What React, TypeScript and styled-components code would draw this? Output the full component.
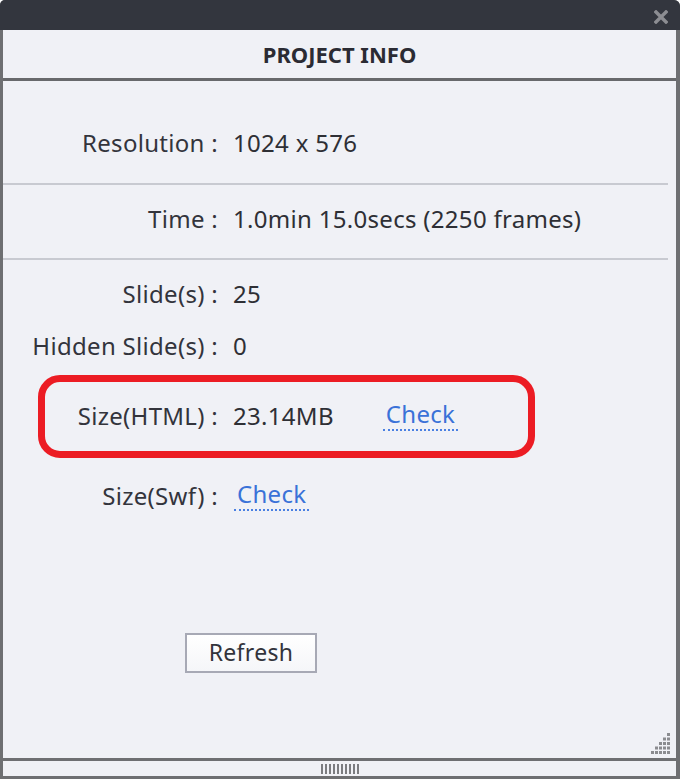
import React from 'react';
import styled, { createGlobalStyle } from 'styled-components';

const GlobalStyle = createGlobalStyle`
  html, body {
    margin: 0;
    padding: 0;
    background: #ffffff;
  }
  body {
    font-family: "Noto Sans", "DejaVu Sans", sans-serif;
  }
`;

const Frame = styled.div`
  width: 680px;
  height: 779px;
  display: flex;
  flex-direction: column;
  background: #6e6f72;
  border-radius: 5px 6px 0 0;
  overflow: hidden;
  box-sizing: border-box;
  padding-bottom: 3px;
`;

const TitleBar = styled.div`
  height: 30px;
  flex: none;
  display: flex;
  align-items: center;
  justify-content: flex-end;
  padding-right: 12px;
  background: #33363e;
`;

const CloseButton = styled.button`
  border: none;
  background: transparent;
  padding: 0;
  margin-top: 3px;
  width: 14px;
  height: 14px;
  display: flex;
  cursor: pointer;
`;

const Header = styled.div`
  height: 48px;
  flex: none;
  margin: 0 4px 0 3px;
  border-bottom: 3px solid #68696c;
  background: #f0f1f6;
  display: flex;
  align-items: center;
  justify-content: center;
  font-size: 22px;
  font-weight: 700;
  color: #2b2b33;
`;

const Body = styled.div`
  flex: 1;
  margin: 0 4px 0 3px;
  background: #f0f1f6;
  display: flex;
  flex-direction: column;
`;

const Section = styled.div<{ $top: number; $bottom: number }>`
  display: flex;
  flex-direction: column;
  padding-top: ${(p) => p.$top}px;
  padding-bottom: ${(p) => p.$bottom}px;
`;

const Divider = styled.div`
  height: 2px;
  margin-right: 8px;
  background: #c8cad1;
`;

const Row = styled.div<{ $gap?: number }>`
  height: 34px;
  margin-top: ${(p) => p.$gap ?? 0}px;
  display: flex;
  align-items: center;
  font-size: 24px;
  letter-spacing: 0.3px;
  color: #33343c;
`;

const Label = styled.span<{ $width: number }>`
  width: ${(p) => p.$width}px;
  flex: none;
  text-align: right;
  white-space: nowrap;
`;

const Value = styled.span`
  margin-left: 15px;
  white-space: nowrap;
  color: #2e2f35;
`;

const CheckLink = styled.a<{ $offset: number }>`
  margin-left: ${(p) => p.$offset}px;
  padding: 0 3px 1px;
  color: #3a72d8;
  text-decoration: none;
  border-bottom: 2px dotted #4a80e2;
  line-height: 28px;
  cursor: pointer;
`;

const Highlight = styled.div`
  margin: 13px 0 0 35px;
  width: 497px;
  height: 83px;
  box-sizing: border-box;
  border: 7px solid #ec1c24;
  border-radius: 22px;
  display: flex;
  align-items: center;
  padding-bottom: 3px;
`;

const RefreshButton = styled.button`
  margin: 121px 0 0 182px;
  align-self: flex-start;
  width: 132px;
  height: 40px;
  box-sizing: border-box;
  border: 2px solid #a7a9b5;
  background: linear-gradient(#ffffff, #f5f6f9);
  font-family: inherit;
  font-size: 23px;
  letter-spacing: 0.3px;
  color: #33343c;
  padding: 0 0 2px;
  cursor: pointer;
`;

const ResizeGrip = styled.svg`
  margin-top: auto;
  margin-right: 6px;
  margin-bottom: 4px;
  align-self: flex-end;
  flex: none;
`;

const Footer = styled.div`
  height: 15px;
  flex: none;
  margin: 3px 4px 0 3px;
  background: #f0f1f6;
  display: flex;
  align-items: center;
  justify-content: center;
  gap: 2px;
`;

const GripBar = styled.span`
  width: 2px;
  height: 10px;
  background: #7b7c80;
`;

const dots: { x: number; y: number }[] = [];
for (let r = 0; r < 5; r++) {
  for (let c = 0; c <= r; c++) {
    dots.push({ x: 16 - c * 4, y: r * 4.5 });
  }
}

export default function App() {
  return (
    <>
      <GlobalStyle />
      <Frame>
        <TitleBar>
          <CloseButton aria-label="Close">
            <svg width="14" height="14" viewBox="0 0 14 14">
              <path d="M2 2 L12 12 M12 2 L2 12" stroke="#8c8d92" strokeWidth="3.4" strokeLinecap="square" />
            </svg>
          </CloseButton>
        </TitleBar>
        <Header>PROJECT INFO</Header>
        <Body>
          <Section $top={44} $bottom={24}>
            <Row>
              <Label $width={215}>Resolution :</Label>
              <Value>1024 x 576</Value>
            </Row>
          </Section>
          <Divider />
          <Section $top={16} $bottom={23}>
            <Row>
              <Label $width={215}>Time :</Label>
              <Value>1.0min 15.0secs (2250 frames)</Value>
            </Row>
          </Section>
          <Divider />
          <Section $top={0} $bottom={0}>
            <Row $gap={16}>
              <Label $width={215}>Slide(s) :</Label>
              <Value>25</Value>
            </Row>
            <Row $gap={18}>
              <Label $width={215}>Hidden Slide(s) :</Label>
              <Value>0</Value>
            </Row>
            <Highlight>
              <Row>
                <Label $width={173}>Size(HTML) :</Label>
                <Value>23.14MB</Value>
                <CheckLink $offset={49}>Check</CheckLink>
              </Row>
            </Highlight>
            <Row $gap={20}>
              <Label $width={215}>Size(Swf) :</Label>
              <CheckLink $offset={16}>Check</CheckLink>
            </Row>
            <RefreshButton>Refresh</RefreshButton>
          </Section>
          <ResizeGrip width="19" height="21" viewBox="0 0 19 21">
            {dots.map((d, i) => (
              <rect key={i} x={d.x} y={d.y} width="3" height="3" fill="#8b8c90" />
            ))}
          </ResizeGrip>
        </Body>
        <Footer>
          {Array.from({ length: 10 }).map((_, i) => (
            <GripBar key={i} />
          ))}
        </Footer>
      </Frame>
    </>
  );
}
